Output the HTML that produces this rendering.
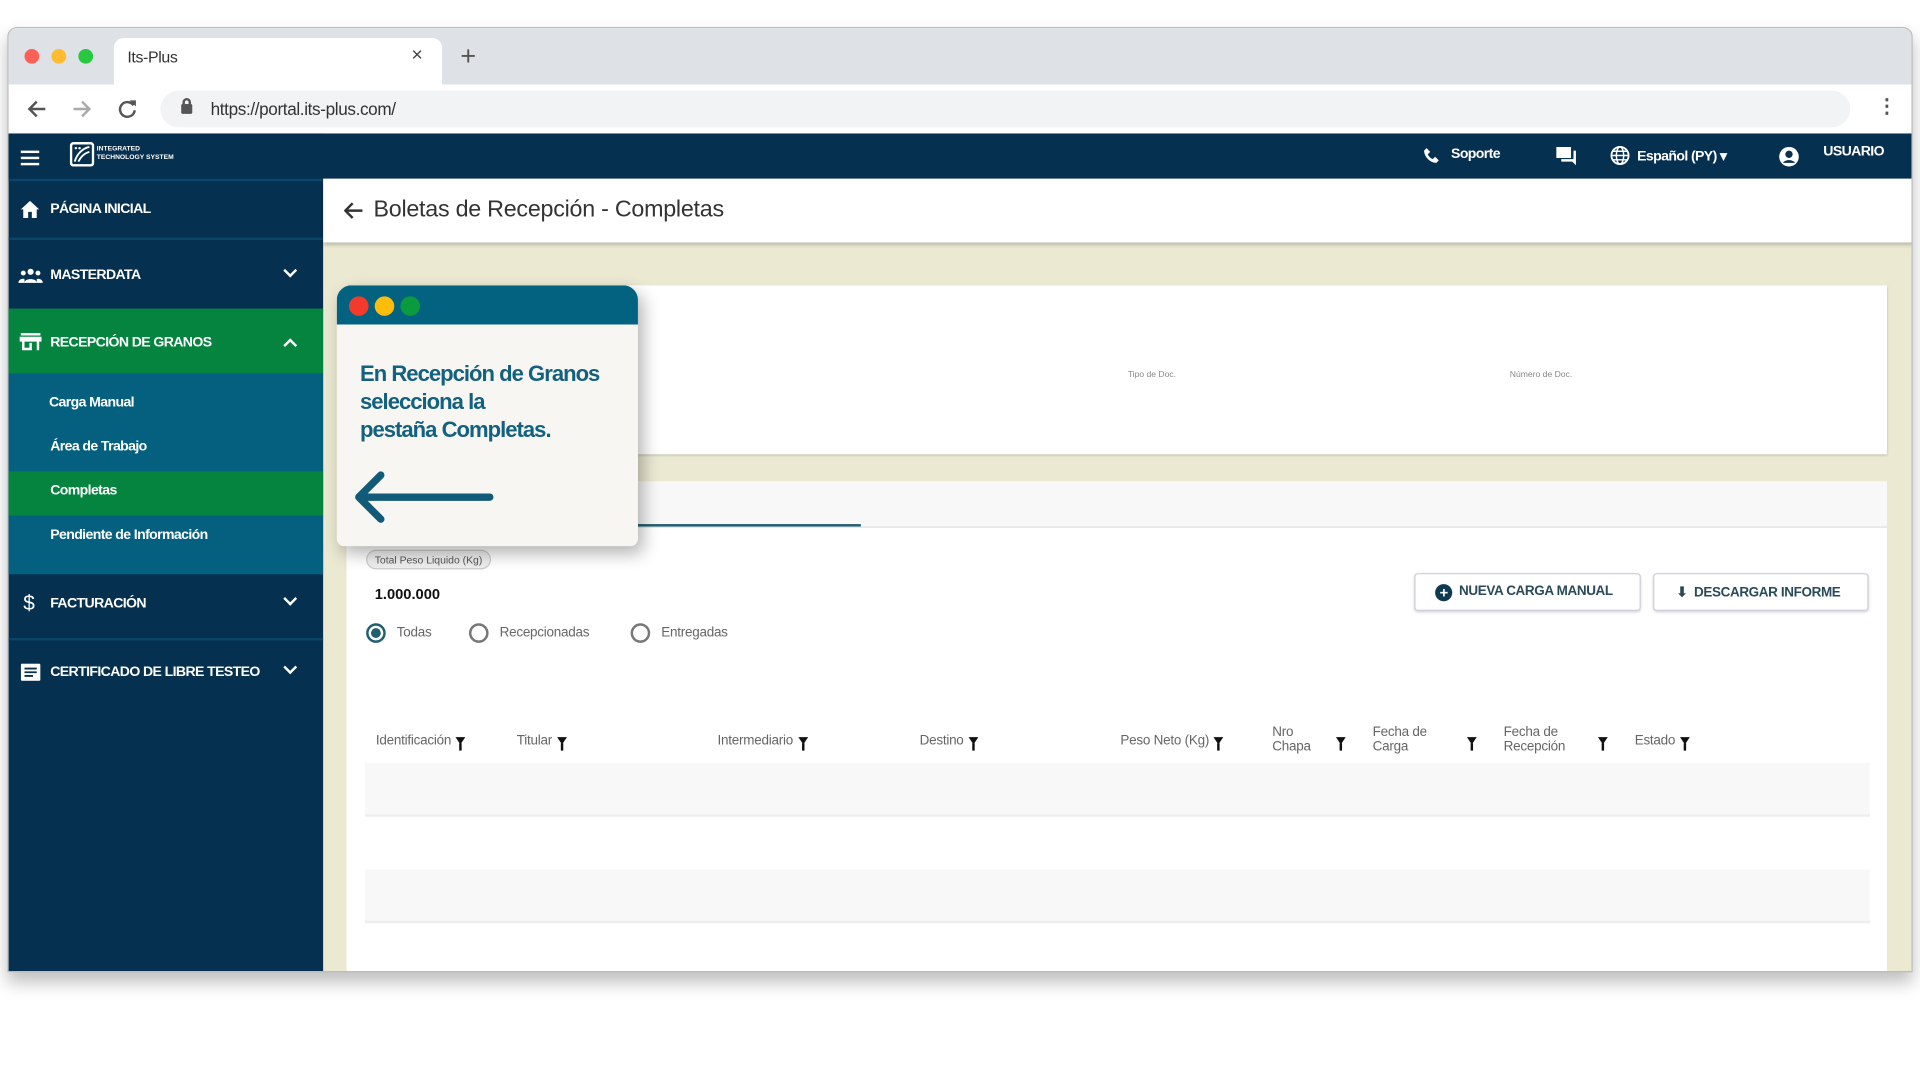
<!DOCTYPE html>
<html><head><meta charset="utf-8"><style>
*{margin:0;padding:0;box-sizing:border-box}
body{width:1920px;height:1080px;overflow:hidden;background:#fff;font-family:"Liberation Sans",sans-serif}
#w{position:absolute;left:0;top:0;width:1568px;height:882px;transform:scale(1.2245);transform-origin:0 0}
.a{position:absolute}
.win{left:6px;top:22px;width:1556px;height:772px;border:1px solid #bbb;border-radius:8px 8px 0 0;overflow:hidden;box-shadow:0 8px 14px rgba(0,0,0,.25);background:#fff}
.sb{color:#fff;font-weight:bold;font-size:11.5px;letter-spacing:-.5px}
.th{font-size:11px;color:#666;letter-spacing:-.2px}
.fl{display:inline-block;width:0;height:0;border-left:4px solid transparent;border-right:4px solid transparent;border-top:6px solid #111;position:relative;margin-left:4px;vertical-align:middle}
.fl:after{content:"";position:absolute;left:-1px;top:-1px;width:2px;height:6px;background:#111}
.fa{position:absolute;margin:0}
.chev{width:8px;height:8px;border-right:2px solid #fff;border-bottom:2px solid #fff}
</style></head><body><div id="w">
<div class="a win">
 <div class="a" style="left:0;top:0;width:1556px;height:46px;background:#dee1e6"></div>
 <div class="a" style="left:13px;top:17px;width:12px;height:12px;border-radius:50%;background:#fe5f57"></div>
 <div class="a" style="left:35px;top:17px;width:12px;height:12px;border-radius:50%;background:#febc2e"></div>
 <div class="a" style="left:57px;top:17px;width:12px;height:12px;border-radius:50%;background:#28c840"></div>
 <div class="a" style="left:86px;top:8px;width:268px;height:40px;background:#fff;border-radius:8px 8px 0 0"></div>
 <div class="a" style="left:97px;top:16px;font-size:13px;color:#333;letter-spacing:-.3px">Its-Plus</div>
 <div class="a" style="left:329px;top:14px;font-size:16px;color:#444">×</div>
 <div class="a" style="left:369px;top:10px;font-size:22px;color:#555">+</div>
 <svg class="a" style="left:15px;top:58px" width="16" height="16"><path d="M15 8H2M8 2 2 8l6 6" fill="none" stroke="#555" stroke-width="2"/></svg>
 <svg class="a" style="left:52px;top:58px" width="16" height="16"><path d="M1 8h13M8 2l6 6-6 6" fill="none" stroke="#aaa" stroke-width="2"/></svg>
 <svg class="a" style="left:89px;top:58px" width="16" height="16"><path d="M13 5A6 6 0 1 0 14 9" fill="none" stroke="#555" stroke-width="2"/><path d="M10 1h5v5z" fill="#555"/></svg>
 <div class="a" style="left:124px;top:51px;width:1380px;height:30px;background:#f1f3f4;border-radius:15px"></div>
 <div class="a" style="left:141px;top:62px;width:9px;height:8px;background:#555;border-radius:1px"></div>
 <div class="a" style="left:142px;top:57px;width:7px;height:7px;border:2px solid #555;border-radius:4px 4px 0 0"></div>
 <div class="a" style="left:165px;top:58px;font-size:14px;color:#333;letter-spacing:-.3px">https://portal.its-plus.com/</div>
 <div class="a" style="left:1526px;top:54px;font-size:16px;color:#555;font-weight:bold">⋮</div>
 <div class="a" style="left:0;top:86px;width:1556px;height:37px;background:#06304f"></div>
 <svg class="a" style="left:1155px;top:97px" width="14" height="14"><path d="M3 1l3 3-2 2c1 2 2 3 4 4l2-2 3 3-2 2C6 13 1 8 1 3z" fill="#fff"/></svg>
 <div class="a sb" style="left:1178px;top:97px">Soporte</div>
 <svg class="a" style="left:1263px;top:96px" width="18" height="17"><path d="M1 1h12v9H1z" fill="#fff"/><path d="M15 4h2v12l-3-3H5v-2h10z" fill="#fff"/></svg>
 <svg class="a" style="left:1308px;top:96px" width="16" height="16"><circle cx="8" cy="8" r="7" fill="none" stroke="#fff" stroke-width="1.5"/><ellipse cx="8" cy="8" rx="3" ry="7" fill="none" stroke="#fff" stroke-width="1.2"/><path d="M1 8h14M2 4.5h12M2 11.5h12" stroke="#fff" stroke-width="1.2"/></svg>
 <div class="a sb" style="left:1330px;top:97px">Español (PY) ▾</div>
 <svg class="a" style="left:1445px;top:96px" width="18" height="18"><circle cx="9" cy="9" r="8" fill="#fff"/><circle cx="9" cy="7" r="3" fill="#06304f"/><path d="M4 14c2-3 8-3 10 0" fill="#06304f"/></svg>
 <div class="a sb" style="left:1482px;top:95px">USUARIO</div>
 <div class="a" style="left:0;top:86px;width:257px;height:690px;background:#06304f"></div>
 <div class="a" style="left:10px;top:100px;width:15px;height:2px;background:#fff;box-shadow:0 5px #fff,0 10px #fff"></div>
 <svg class="a" style="left:50px;top:93px" width="20" height="20"><rect x="1" y="1" width="18" height="18" rx="2" fill="none" stroke="#fff" stroke-width="2"/><path d="M4 16C6 9 11 5 16 4M7 16c2-4 5-7 9-8" stroke="#fff" stroke-width="1.5" fill="none"/><circle cx="5" cy="5" r="1" fill="#fff"/><circle cx="8" cy="5" r="1" fill="#fff"/></svg>
 <div class="a" style="left:72px;top:96px;font-size:5.5px;color:#fff;font-weight:bold;line-height:7px">INTEGRATED<br>TECHNOLOGY SYSTEM</div>
 <div class="a" style="left:0;top:123px;width:257px;height:2px;background:#0a4468"></div>
 <svg class="a" style="left:9px;top:140px" width="17" height="16"><path d="M8.5 1 1 8h2v7h4v-5h3v5h4V8h2z" fill="#fff"/></svg>
 <div class="a sb" style="left:34px;top:142px">PÁGINA INICIAL</div>
 <div class="a" style="left:0;top:171px;width:257px;height:2px;background:#0a4468"></div>
 <svg class="a" style="left:8px;top:195px" width="20" height="14"><circle cx="10" cy="4" r="2.5" fill="#fff"/><circle cx="4" cy="5" r="2" fill="#fff"/><circle cx="16" cy="5" r="2" fill="#fff"/><path d="M5 13c0-4 10-4 10 0zM0 13c0-3 4-4 5-3v3zM20 13c0-3-4-4-5-3v3z" fill="#fff"/></svg>
 <div class="a sb" style="left:34px;top:196px">MASTERDATA</div>
 <div class="a chev" style="left:226px;top:194px;transform:rotate(45deg)"></div>
 <div class="a" style="left:0;top:229px;width:257px;height:53px;background:#05843f"></div>
 <svg class="a" style="left:9px;top:248px" width="18" height="16"><path d="M1 1h16v2H1zM0 4h18v4H0zM2 8h2v7H2zM14 8h2v7h-2zM2 13h8v2H2zM8 9h2v5H8z" fill="#fff"/></svg>
 <div class="a sb" style="left:34px;top:251px">RECEPCIÓN DE GRANOS</div>
 <div class="a chev" style="left:226px;top:255px;transform:rotate(-135deg)"></div>
 <div class="a" style="left:0;top:282px;width:257px;height:164px;background:#05607f"></div>
 <div class="a sb" style="left:33px;top:300px">Carga Manual</div>
 <div class="a sb" style="left:34px;top:336px">Área de Trabajo</div>
 <div class="a" style="left:0;top:362px;width:257px;height:36px;background:#05843f"></div>
 <div class="a sb" style="left:34px;top:372px">Completas</div>
 <div class="a sb" style="left:34px;top:408px">Pendiente de Información</div>
 <div class="a sb" style="left:12px;top:460px;font-size:17px;font-weight:normal">$</div>
 <div class="a sb" style="left:34px;top:464px">FACTURACIÓN</div>
 <div class="a chev" style="left:226px;top:462px;transform:rotate(45deg)"></div>
 <div class="a" style="left:0;top:498px;width:257px;height:2px;background:#0a4468"></div>
 <svg class="a" style="left:10px;top:519px" width="16" height="14"><rect width="16" height="14" rx="1" fill="#fff"/><path d="M3 4h10M3 7h10M3 10h7" stroke="#06304f" stroke-width="1.5"/></svg>
 <div class="a sb" style="left:34px;top:520px">CERTIFICADO DE LIBRE TESTEO</div>
 <div class="a chev" style="left:226px;top:518px;transform:rotate(45deg)"></div>
 <div class="a" style="left:257px;top:123px;width:1299px;height:653px;background:#ebe9d2"></div>
 <div class="a" style="left:257px;top:123px;width:1299px;height:52px;background:#fff;box-shadow:0 2px 3px rgba(0,0,0,.2)"></div>
 <svg class="a" style="left:274px;top:142px" width="16" height="14"><path d="M15 7H2M7 1 1 7l6 6" fill="none" stroke="#333" stroke-width="2"/></svg>
 <div class="a" style="left:298px;top:138px;font-size:19px;color:#333;letter-spacing:-.2px">Boletas de Recepción - Completas</div>
 <div class="a" style="left:276px;top:210px;width:1258px;height:138px;background:#fff;box-shadow:0 1px 2px rgba(0,0,0,.2)"></div>
 <div class="a" style="left:914px;top:280px;font-size:7px;color:#888">Tipo de Doc.</div>
 <div class="a" style="left:1226px;top:280px;font-size:7px;color:#888">Número de Doc.</div>
 <div class="a" style="left:276px;top:370px;width:1258px;height:38px;background:#f8f8f8;border-bottom:1px solid #ddd"></div>
 <div class="a" style="left:514px;top:405px;width:182px;height:2px;background:#1f5f6e"></div>
 <div class="a" style="left:276px;top:408px;width:1258px;height:368px;background:#fff"></div>
 <div class="a" style="left:292px;top:426px;padding:2px 6px;font-size:8.5px;color:#555;background:#eee;border:1px solid #ccc;border-radius:9px">Total Peso Liquido (Kg)</div>
 <div class="a" style="left:299px;top:455px;font-size:12px;font-weight:bold;color:#111">1.000.000</div>
 <div class="a" style="left:292px;top:486px;width:16px;height:16px;border:2px solid #1f5f6e;border-radius:50%"></div>
 <div class="a" style="left:296px;top:490px;width:8px;height:8px;background:#1f5f6e;border-radius:50%"></div>
 <div class="a th" style="left:317px;top:488px">Todas</div>
 <div class="a" style="left:376px;top:486px;width:16px;height:16px;border:2px solid #777;border-radius:50%"></div>
 <div class="a th" style="left:401px;top:488px">Recepcionadas</div>
 <div class="a" style="left:508px;top:486px;width:16px;height:16px;border:2px solid #777;border-radius:50%"></div>
 <div class="a th" style="left:533px;top:488px">Entregadas</div>
 <div class="a" style="left:1148px;top:445px;width:185px;height:31px;border:1px solid #ccd;border-radius:3px;box-shadow:0 1px 2px rgba(0,0,0,.15);font-size:11px;font-weight:bold;color:#2a4a5a;padding:8px 0 0 16px;letter-spacing:-.3px"><span style="display:inline-block;width:14px;height:14px;border-radius:50%;background:#0e3b52;color:#fff;text-align:center;line-height:14px;font-size:12px;vertical-align:-2px">+</span>&nbsp; NUEVA CARGA MANUAL</div>
 <div class="a" style="left:1343px;top:445px;width:176px;height:31px;border:1px solid #ccd;border-radius:3px;box-shadow:0 1px 2px rgba(0,0,0,.15);font-size:11px;font-weight:bold;color:#2a4a5a;padding:8px 0 0 18px;letter-spacing:-.3px">⬇&nbsp; DESCARGAR INFORME</div>
 <div class="a th" style="left:300px;top:576px">Identificación<span class="fl"></span></div>
 <div class="a th" style="left:415px;top:576px">Titular<span class="fl"></span></div>
 <div class="a th" style="left:579px;top:576px">Intermediario<span class="fl"></span></div>
 <div class="a th" style="left:744px;top:576px">Destino<span class="fl"></span></div>
 <div class="a th" style="left:908px;top:576px">Peso Neto (Kg)<span class="fl"></span></div>
 <div class="a th" style="left:1032px;top:569px;line-height:12px">Nro<br>Chapa</div><span class="fl fa" style="left:1084px;top:579px"></span>
 <div class="a th" style="left:1114px;top:569px;line-height:12px">Fecha de<br>Carga</div><span class="fl fa" style="left:1191px;top:579px"></span>
 <div class="a th" style="left:1221px;top:569px;line-height:12px">Fecha de<br>Recepción</div><span class="fl fa" style="left:1298px;top:579px"></span>
 <div class="a th" style="left:1328px;top:576px">Estado<span class="fl"></span></div>
 <div class="a" style="left:291px;top:600px;width:1229px;height:44px;background:#f8f8f8;border-bottom:2px solid #eee"></div>
 <div class="a" style="left:291px;top:687px;width:1229px;height:44px;background:#f8f8f8;border-bottom:2px solid #eee"></div>
</div>
<div class="a" style="left:275px;top:233px;width:246px;height:213px;background:#f7f6f3;border-radius:12px 12px 6px 6px;overflow:hidden;box-shadow:4px 6px 14px rgba(0,0,0,.3)">
 <div class="a" style="left:0;top:0;width:246px;height:32px;background:#03627f"></div>
 <div class="a" style="left:10px;top:9px;width:16px;height:16px;border-radius:50%;background:#f43a2a"></div>
 <div class="a" style="left:31px;top:9px;width:16px;height:16px;border-radius:50%;background:#fdbd0a"></div>
 <div class="a" style="left:52px;top:9px;width:16px;height:16px;border-radius:50%;background:#0b9b3f"></div>
 <div class="a" style="left:19px;top:61px;font-size:18px;line-height:23px;font-weight:bold;color:#13607f;letter-spacing:-.8px">En Recepción de Granos<br>selecciona la<br>pestaña Completas.</div>
 <svg class="a" style="left:10px;top:150px" width="120" height="45"><path d="M115 23H8M26 5 8 23l18 18" fill="none" stroke="#115a78" stroke-width="6" stroke-linecap="round" stroke-linejoin="round"/></svg>
</div>
</div></body></html>
